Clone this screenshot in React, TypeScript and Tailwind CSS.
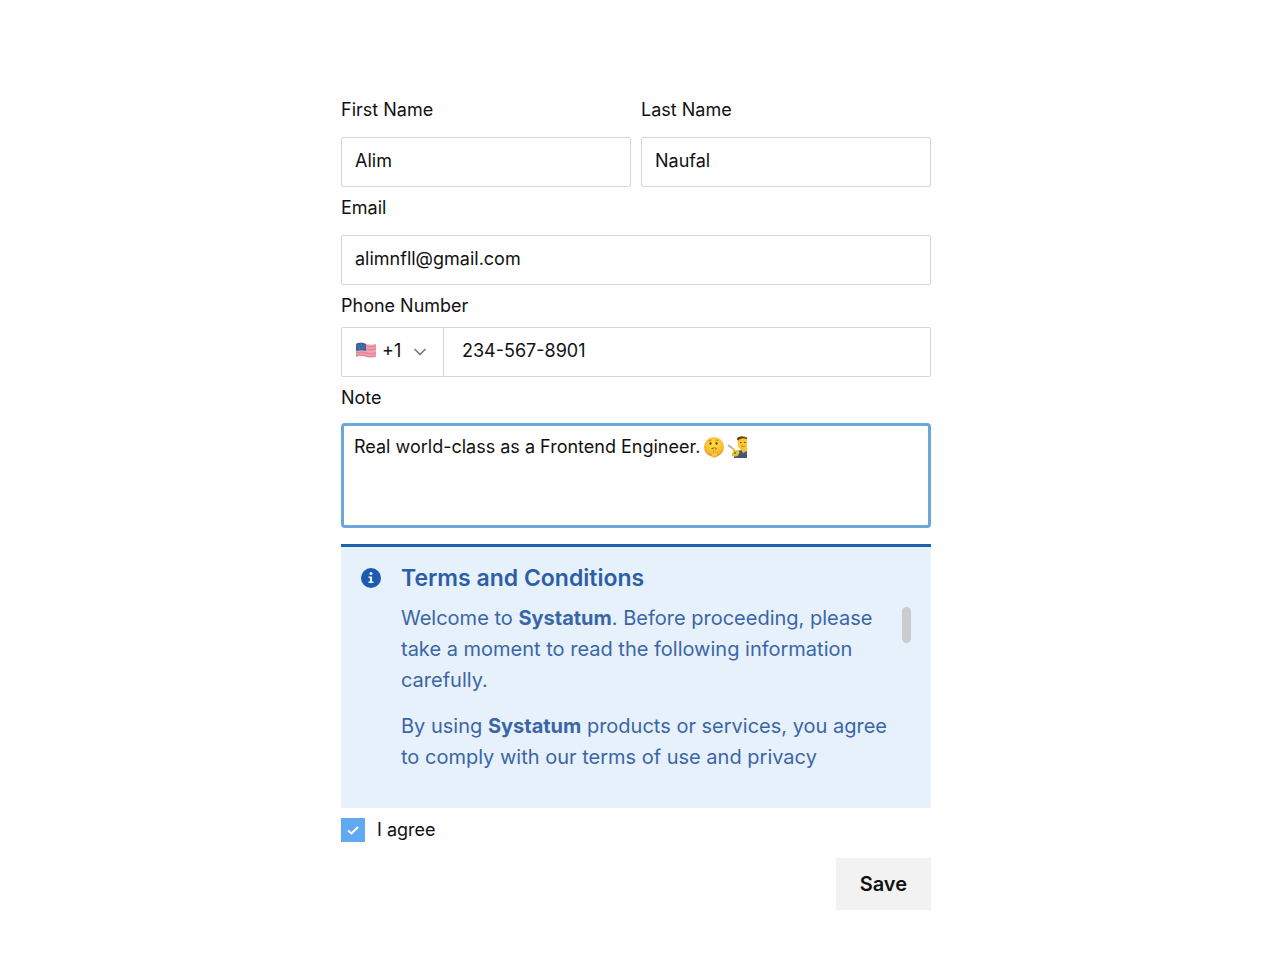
import { useState } from 'react'
import type { InputHTMLAttributes } from 'react'
import { ChevronDown } from 'lucide-react'

interface TextFieldProps extends InputHTMLAttributes<HTMLInputElement> {
  id: string
  label: string
}

const boxClass = 'h-[50px] w-full min-w-0 rounded-xs border border-[#d6d6d6] bg-white px-[13px] pb-1 text-[18px] text-[#111111] outline-none'
const labelClass = 'text-[18px] leading-[26px] text-[#111111]'

function TextField({ id, label, ...rest }: TextFieldProps) {
  return (
    <div className="flex min-w-0 flex-1 flex-col gap-[14px]">
      <label htmlFor={id} className={labelClass}>{label}</label>
      <input id={id} className={boxClass} {...rest} />
    </div>
  )
}

function FlagUS({ className }: { className?: string }) {
  return (
    <svg viewBox="0 0 20 16" className={className} aria-hidden="true">
      <path d="M0 2C4 0 7 1 10 2s6 1 10 0v12c-4 1-7 1-10 0s-6-1-10 1z" fill="#f0a5b2" />
      <path d="M9 4c4 1 7 1 11 0M9 7c4 1 7 1 11 0M0 11c4-1 7-1 10 0s6 1 10 0M0 14c4-2 7-1 10 0s6 1 10 0" fill="none" stroke="#e58595" strokeWidth="1.4" />
      <path d="M0 2C4 0 7 1 10 2v7C7 8 4 8 0 9z" fill="#39649f" />
      <path d="M2 4h1M5 3h1M8 4h1M3 6h1M6 6h1" stroke="#7d9dcb" strokeWidth="0.8" />
    </svg>
  )
}

function ShushingFace() {
  return (
    <svg viewBox="0 0 22 22" className="size-[22px]" aria-hidden="true">
      <defs>
        <radialGradient id="face" cx="50%" cy="35%" r="65%">
          <stop offset="0" stopColor="#ffe04a" />
          <stop offset="0.65" stopColor="#fbc02f" />
          <stop offset="1" stopColor="#e8932a" />
        </radialGradient>
      </defs>
      <circle cx="11" cy="11" r="10" fill="url(#face)" />
      <ellipse cx="7.5" cy="7.5" rx="1.1" ry="1.4" fill="#7a4a12" />
      <ellipse cx="13.5" cy="7.5" rx="1.1" ry="1.4" fill="#7a4a12" />
      <path d="M5.5 4.8q1.5-1.2 3-.6M12.5 4.2q1.500-.6 3 .6" fill="none" stroke="#a8681b" strokeWidth="0.8" />
      <path d="M8.500 12.800q2.500-1.600 5 0" fill="none" stroke="#8a4f14" strokeWidth="1.2" />
      <path d="M10.500 12h1.800v4.500l2.700.5-1 3.500-4 .8-2-2.500 2.500-1.800z" fill="#ffc93d" stroke="#e39a2c" strokeWidth="0.7" />
    </svg>
  )
}

function Artist() {
  return (
    <svg viewBox="0 0 22 22" className="size-[22px]" aria-hidden="true">
      <path d="M7 22c0-5 3-8 8-8h5v8z" fill="#3f5873" />
      <path d="M10.500 2C12 0 18 0 20 1v12c-3 2-8 1-9-3z" fill="#fbc72d" />
      <path d="M10 3.500c0-3 4-3.500 7-2.500l3 .5V3l-4-.8-3 .8-2 1.500z" fill="#5a3d26" />
      <path d="M13 6.500h1.500M17 6.500h1.500" stroke="#6b4316" strokeWidth="1.2" />
      <path d="M14 10q2 1.300 4 0" fill="none" stroke="#c98922" strokeWidth="1" />
      <path d="M5 20c-1-3 2-6 5-6 2 0 3 2 2 4s-2 3-7 2z" fill="#e9c02a" />
      <circle cx="8" cy="17" r="1" fill="#5d7d36" />
      <path d="M1 9l4 3" stroke="#a9b2bb" strokeWidth="2" />
      <path d="M5 12l3 3" stroke="#e4b83a" strokeWidth="2" />
      <path d="M13 12l7 1v2l-4 2z" fill="#f4c332" />
    </svg>
  )
}

function InfoIcon() {
  return (
    <svg viewBox="0 0 20 20" className="mt-[7px] size-5 shrink-0" aria-hidden="true">
      <circle cx="10" cy="10" r="10" fill="#1d5bb0" />
      <circle cx="10" cy="5.5" r="1.5" fill="#e7f1fc" />
      <path d="M7.500 8.500h3.600v5h1.400v1.500h-5v-1.500h1.400V10H7.500z" fill="#e7f1fc" />
    </svg>
  )
}

function Terms() {
  return (
    <section className="mt-4 flex h-[264px] gap-5 border-t-[3px] border-[#1f62ae] bg-[#e7f1fc] px-5 pt-[14px] text-[#3a66a6]">
      <InfoIcon />
      <div className="min-w-0 flex-1">
        <h2 className="pb-2 text-[23px] leading-[34px] font-semibold text-[#2d5ea8]">Terms and Conditions</h2>
        <div className="flex">
          <div className="h-[172px] min-w-0 flex-1 overflow-hidden text-[20px] leading-[31px]">
            <p>
              Welcome to <strong className="font-bold">Systatum</strong>. Before proceeding, please take a moment to read the following information carefully.
            </p>
            <p className="mt-[15px]">
              By using <strong className="font-bold">Systatum</strong> products or services, you agree to comply with our terms of use and privacy
            </p>
          </div>
          <div className="mt-1 h-9 w-[9px] rounded-full bg-[#cbcacc]"></div>
        </div>
      </div>
    </section>
  )
}

export default function App() {
  const [note, setNote] = useState('Real world-class as a Frontend Engineer.')
  const [agreed, setAgreed] = useState(true)

  return (
    <main className="min-h-screen bg-[#fefefe] px-4 pt-[97px] pb-12 font-['Inter',sans-serif]">
      <div className="mx-auto max-w-[598px] pr-2">
        <form className="flex flex-col" onSubmit={(e) => e.preventDefault()}>
          <div className="flex gap-[10px]">
            <TextField id="firstName" label="First Name" defaultValue="Alim" />
            <TextField id="lastName" label="Last Name" defaultValue="Naufal" />
          </div>

          <div className="mt-2 flex">
            <TextField id="email" label="Email" type="email" defaultValue="alimnfll@gmail.com" />
          </div>

          {/* Phone */}
          <div className="mt-2 flex flex-col gap-2">
            <label htmlFor="phone" className={labelClass}>Phone Number</label>
            <div className="flex h-[50px] rounded-xs border border-[#d6d6d6] bg-white">
              <div className="relative w-[102px] shrink-0 border-r border-[#d6d6d6]">
                <FlagUS className="pointer-events-none absolute top-[14px] left-[14px] h-4 w-5" />
                <select aria-label="Country code" className="h-full w-full appearance-none bg-transparent pb-1 pl-10 text-[18px] text-[#111111] outline-none">
                  <option>+1</option>
                </select>
                <ChevronDown className="pointer-events-none absolute top-[14px] right-[13px] size-5 text-[#777777]" strokeWidth={2} />
              </div>
              <input id="phone" type="tel" defaultValue="234-567-8901" className="min-w-0 flex-1 px-[18px] pb-1 text-[18px] text-[#111111] outline-none" />
            </div>
          </div>

          {/* Note */}
          <div className="mt-2 flex flex-col gap-3">
            <label htmlFor="note" className={labelClass}>Note</label>
            <div className="relative flex">
              <textarea
                id="note"
                value={note}
                onChange={(e) => setNote(e.target.value)}
                className="h-[105px] w-full resize-none rounded-sm border-[3px] border-[#6ba6dc] bg-white px-[10px] py-2 text-[18px] leading-[26px] text-[#111111] outline-none"
              />
              <div className="pointer-events-none absolute top-[13px] left-[362px] flex gap-[2px]">
                <ShushingFace />
                <Artist />
              </div>
            </div>
          </div>

          <Terms />

          <label className="mt-[10px] flex items-center gap-3 self-start text-[18px] leading-6 text-[#111111]">
            <span className="relative flex">
              <input
                type="checkbox"
                checked={agreed}
                onChange={(e) => setAgreed(e.target.checked)}
                className="peer size-6 appearance-none border border-[#61a9f3] bg-white checked:bg-[#61a9f3]"
              />
              <svg viewBox="0 0 24 24" className="pointer-events-none absolute inset-0 hidden size-6 peer-checked:block" aria-hidden="true">
                <path d="M7 12.500l3.500 3L17 9" fill="none" stroke="#ffffff" strokeWidth="2" />
              </svg>
            </span>
            I agree
          </label>

          <button type="submit" className="mt-4 h-[52px] self-end bg-[#f2f2f2] px-6 text-[20px] font-semibold text-[#111111]">
            Save
          </button>
        </form>
      </div>
    </main>
  )
}
